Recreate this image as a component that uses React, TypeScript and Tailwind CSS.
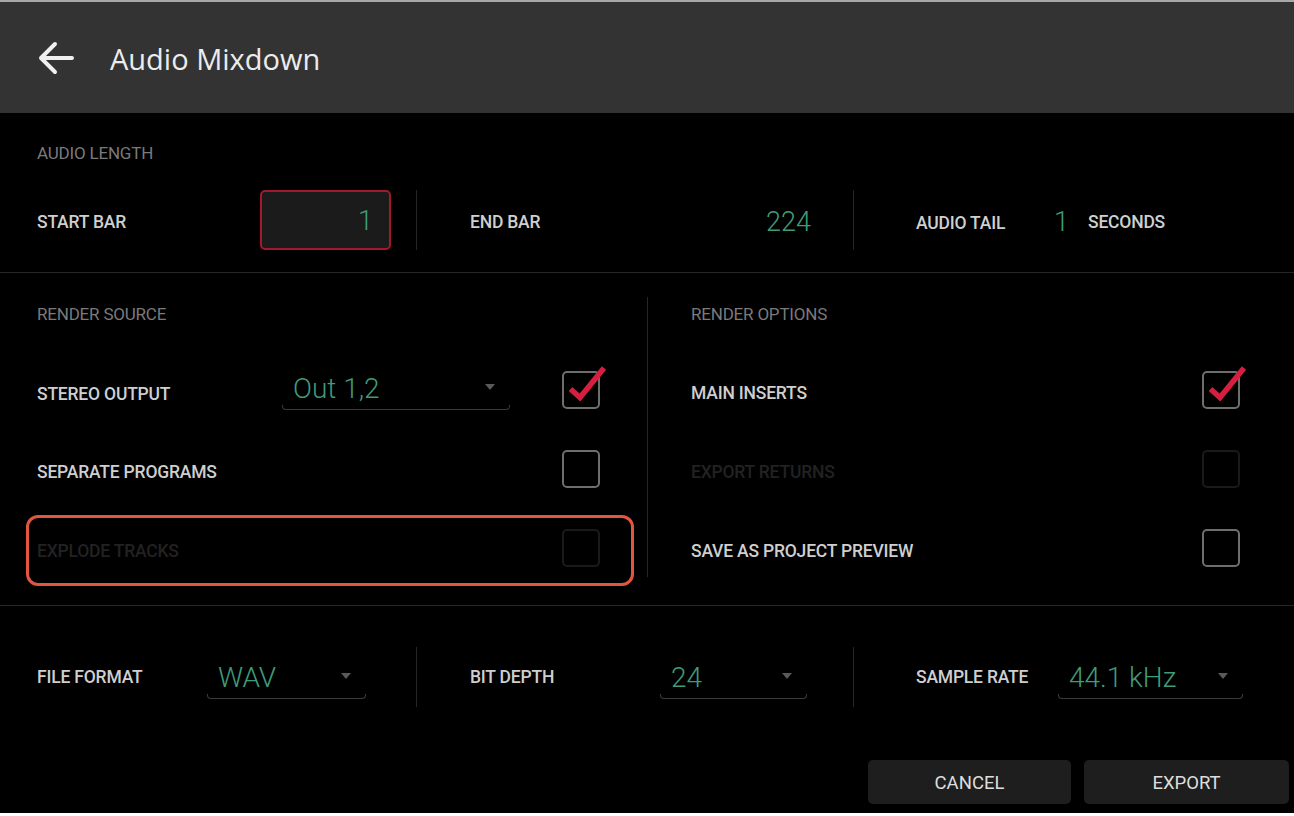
import React from "react";

const LABEL = "font-['Roboto','Liberation_Sans',sans-serif]";
const NUM = "font-['Roboto','Liberation_Sans',sans-serif] font-light text-[#3f9c78]";

function Caret() {
  return (
    <svg width="10" height="6" viewBox="0 0 10 6" className="shrink-0">
      <path d="M0 0 L10 0 L5 6 Z" fill="#5a5a5a" />
    </svg>
  );
}

function Dropdown({ value, width }: { value: string; width: string }) {
  return (
    <div className={`${width} flex flex-col`}>
      <div className="flex items-center justify-between pl-[11px] pr-[15px]">
        <span className={`${NUM} text-[28px] leading-none`}>{value}</span>
        <span className="-mt-[4px]">
          <Caret />
        </span>
      </div>
      <div className="mt-[2px] h-[5px] border-x border-b border-[#3a3a3a] rounded-b-[4px]" />
    </div>
  );
}

function Checkbox({ checked, disabled }: { checked?: boolean; disabled?: boolean }) {
  return (
    <div
      className={`relative w-[38px] h-[38px] mb-[8px] shrink-0 rounded-[5px] border-2 ${
        disabled ? "border-[#1a1a1a]" : "border-[#6e6e6e]"
      }`}
    >
      {checked && (
        <svg
          width="38"
          height="38"
          viewBox="0 0 38 38"
          className="absolute -left-[2px] -top-[2px] overflow-visible"
        >
          <path d="M8.5 18 L18 26.5 L42 -3" fill="none" stroke="#d81e40" strokeWidth="5.5" strokeLinecap="butt" strokeLinejoin="miter" />
        </svg>
      )}
    </div>
  );
}

function Divider() {
  return <div className="w-px h-[60px] bg-[#262626] shrink-0" />;
}

function Label({ children, dim }: { children: React.ReactNode; dim?: boolean }) {
  return (
    <span
      className={`${LABEL} font-medium text-[17.5px] tracking-[-0.2px] leading-none ${
        dim ? "text-[#222222]" : "text-[#cfcfcf]"
      }`}
    >
      {children}
    </span>
  );
}

function Header({ children }: { children: React.ReactNode }) {
  return (
    <div className={`${LABEL} text-[17px] tracking-[-0.2px] leading-[20px] h-[20px] text-[#7a7a7a]`}>{children}</div>
  );
}

export default function App() {
  return (
    <div className="w-[1294px] h-[816px] bg-white overflow-hidden">
      <div className="h-[813px] flex flex-col bg-black border-t-2 border-[#a8a8a8]">
        {/* Title bar */}
        <div className="h-[111px] shrink-0 bg-[#333334] flex items-center pl-[38px]">
          <svg width="36" height="34" viewBox="0 0 36 34">
            <path d="M34 17 H3 M17 3 L3 17 L17 31" fill="none" stroke="#f0f0f0" strokeWidth="4" strokeLinecap="round" strokeLinejoin="round" />
          </svg>
          <span className="ml-[36px] font-['Open_Sans',sans-serif] text-[29px] leading-none text-[#ececec] mt-[2px]">
            Audio Mixdown
          </span>
        </div>

        {/* Audio length */}
        <div className="h-[160px] shrink-0 border-b border-[#262626] pt-[30px] pl-[37px]">
          <Header>AUDIO LENGTH</Header>
          <div className="mt-[27px] h-[60px] flex items-center">
            <div className="w-[379px] flex items-center justify-between pr-[25px]">
              <span className="mt-[4px]">
                <Label>START BAR</Label>
              </span>
              <div className="w-[131px] h-[60px] rounded-[5px] border-2 border-[#a3182c] bg-[#1b1b1b] flex items-center justify-end pr-[16px]">
                <span className={`${NUM} text-[27px] leading-none mt-[3px]`}>1</span>
              </div>
            </div>
            <Divider />
            <div className="w-[436px] flex items-center justify-between pl-[53px] pr-[42px] mt-[5px]">
              <Label>END BAR</Label>
              <span className={`${NUM} text-[27px] leading-none`}>224</span>
            </div>
            <Divider />
            <div className="flex items-center pl-[62px] mt-[5px]">
              <div className="w-[138px]">
                <Label>AUDIO TAIL</Label>
              </div>
              <div className="w-[34px]">
                <span className={`${NUM} text-[27px] leading-none`}>1</span>
              </div>
              <Label>SECONDS</Label>
            </div>
          </div>
        </div>

        {/* Render source / options */}
        <div className="h-[333px] shrink-0 border-b border-[#262626] flex relative">
          <div className="w-[647px] shrink-0 pl-[37px] pr-[47px] pt-[31px]">
            <Header>RENDER SOURCE</Header>
            <div className="mt-[30px] flex flex-col">
              <div className="h-[79px] flex items-center">
                <div className="w-[245px]">
                  <Label>STEREO OUTPUT</Label>
                </div>
                <div className="mt-[-2px]">
                  <Dropdown value="Out 1,2" width="w-[228px]" />
                </div>
                <div className="flex-1" />
                <Checkbox checked />
              </div>
              <div className="h-[79px] flex items-center justify-between">
                <Label>SEPARATE PROGRAMS</Label>
                <Checkbox />
              </div>
              <div className="h-[79px] flex items-center justify-between">
                <Label dim>EXPLODE TRACKS</Label>
                <Checkbox disabled />
              </div>
            </div>
          </div>
          <div className="w-px bg-[#262626] mt-[24px] mb-[28px] shrink-0" />
          <div className="flex-1 pl-[43px] pr-[54px] pt-[31px]">
            <Header>RENDER OPTIONS</Header>
            <div className="mt-[30px] flex flex-col">
              <div className="h-[79px] flex items-center justify-between">
                <Label>MAIN INSERTS</Label>
                <Checkbox checked />
              </div>
              <div className="h-[79px] flex items-center justify-between">
                <Label dim>EXPORT RETURNS</Label>
                <Checkbox disabled />
              </div>
              <div className="h-[79px] flex items-center justify-between">
                <Label>SAVE AS PROJECT PREVIEW</Label>
                <Checkbox />
              </div>
            </div>
          </div>
          {/* annotation highlight */}
          <div className="absolute left-[26px] top-[242px] w-[608px] h-[71px] rounded-[12px] border-[3px] border-[#e2553f] pointer-events-none" />
        </div>

        {/* File format */}
        <div className="flex-1 flex flex-col pt-[41px]">
          <div className="h-[60px] flex items-center pl-[37px]">
            <div className="w-[379px] flex items-center">
              <div className="w-[170px]">
                <Label>FILE FORMAT</Label>
              </div>
              <div className="mt-[8px]">
                <Dropdown value="WAV" width="w-[159px]" />
              </div>
            </div>
            <Divider />
            <div className="w-[436px] flex items-center pl-[53px]">
              <div className="w-[190px]">
                <Label>BIT DEPTH</Label>
              </div>
              <div className="mt-[8px]">
                <Dropdown value="24" width="w-[147px]" />
              </div>
            </div>
            <Divider />
            <div className="flex items-center pl-[62px]">
              <div className="w-[142px]">
                <Label>SAMPLE RATE</Label>
              </div>
              <div className="mt-[8px]">
                <Dropdown value="44.1 kHz" width="w-[185px]" />
              </div>
            </div>
          </div>
          <div className="mt-[53px] flex justify-end gap-[13px] pr-[5px]">
            <button className={`w-[203px] h-[44px] pt-[4px] rounded-[5px] bg-[#1e1e1e] ${LABEL} text-[18.5px] text-[#dedede]`}>
              CANCEL
            </button>
            <button className={`w-[205px] h-[44px] pt-[4px] rounded-[5px] bg-[#1e1e1e] ${LABEL} text-[18.5px] text-[#dedede]`}>
              EXPORT
            </button>
          </div>
        </div>
      </div>
    </div>
  );
}
